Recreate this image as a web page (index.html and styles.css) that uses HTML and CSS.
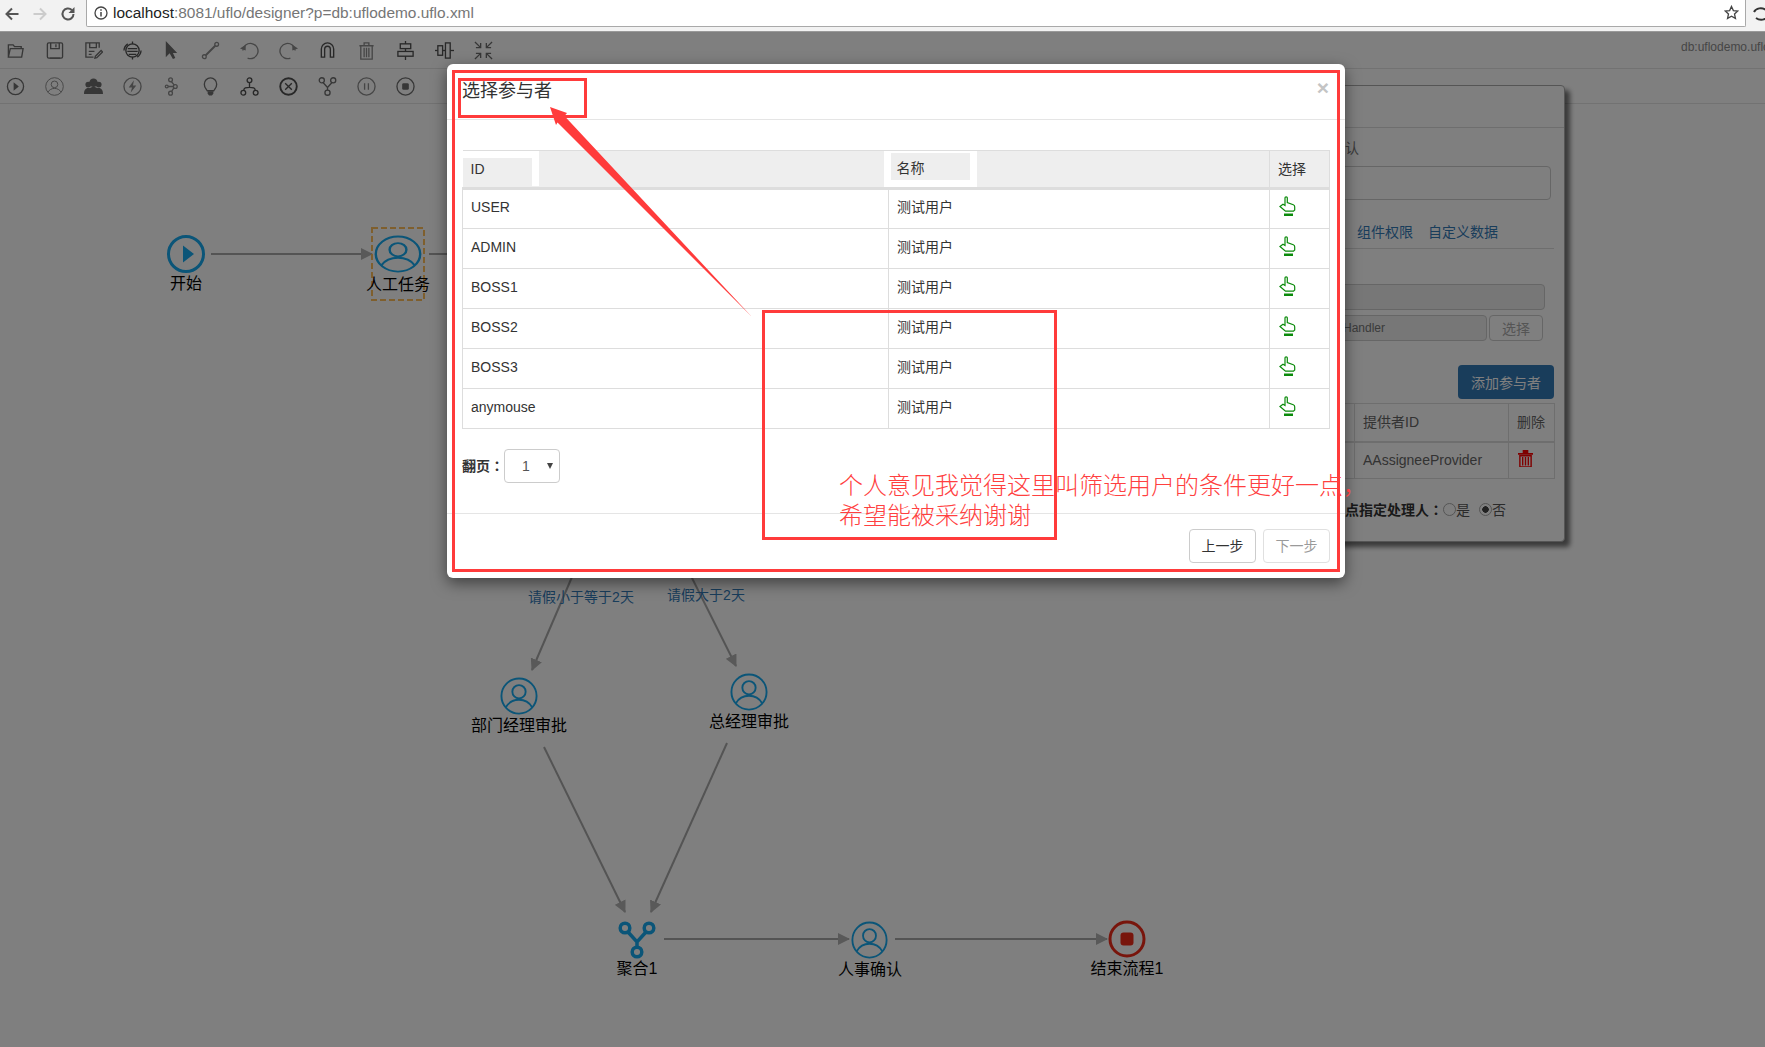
FILE: index.html
```html
<!DOCTYPE html>
<html lang="zh-CN">
<head>
<meta charset="utf-8">
<title>uflo designer</title>
<link rel="stylesheet" href="styles.css">
</head>
<body>
<svg class="sprite" aria-hidden="true">
  <defs>
    <symbol id="user" viewBox="0 0 40 40" preserveAspectRatio="none">
      <circle cx="20" cy="20" r="18.5" fill="none" stroke="currentColor" stroke-width="2"/>
      <circle cx="20" cy="15.5" r="7" fill="none" stroke="currentColor" stroke-width="2"/>
      <path d="M6 32c3-5 8-8 14-8s11 3 14 8" fill="none" stroke="currentColor" stroke-width="2"/>
    </symbol>
    <symbol id="hand" viewBox="0 0 17 20">
      <path d="M1 10.500l3-2.200 2 1.200V1.800c0-1.200 2.300-1.200 2.300 0v4.700l6 2.200c1 .4 1.400 1 1.400 2v3.300l-1.200 1.200H6.500L1 10.500z" fill="none" stroke="#0a8a0a" stroke-width="1.200"/>
      <rect x="5" y="17.500" width="9" height="2.500" fill="#0a8a0a"/>
    </symbol>
    <marker id="tip" markerUnits="userSpaceOnUse" markerWidth="12" markerHeight="12" refX="11" refY="6" orient="auto">
      <path d="M0 0l12 6-12 6z" fill="#b2b2b2"/>
    </marker>
  </defs>
</svg>

<header class="chrome">
  <svg class="nav-icon" viewBox="0 0 16 16"><path d="M14.500 8H3M8 2.500L2.500 8 8 13.500" fill="none" stroke="#555" stroke-width="2"/></svg>
  <svg class="nav-icon" viewBox="0 0 16 16"><path d="M1.500 8H13M8 2.500L13.500 8 8 13.500" fill="none" stroke="#ccc" stroke-width="2"/></svg>
  <svg class="nav-icon" viewBox="0 0 16 16"><path d="M13.500 8a5.500 5.500 0 1 1-1.700-4" fill="none" stroke="#555" stroke-width="2"/><path d="M14.500 1v6h-6z" fill="#555"/></svg>
  <div class="omnibox">
    <svg class="info" viewBox="0 0 14 14"><circle cx="7" cy="7" r="6" fill="none" stroke="#444" stroke-width="1.300"/><path d="M7 6v4.500M7 3.200v1.500" stroke="#444" stroke-width="1.500"/></svg>
    <span class="url"><span class="url-host">localhost</span>:8081/uflo/designer?p=db:uflodemo.uflo.xml</span>
    <svg class="star" viewBox="0 0 16 16"><path d="M8 1.500l2 4.400 4.700.5-3.500 3.200 1 4.700L8 11.900l-4.200 2.400 1-4.700L1.300 6.400 6 5.900z" fill="none" stroke="#444" stroke-width="1.400"/></svg>
  </div>
  <svg class="ext" viewBox="0 0 16 16"><path d="M1 6c2-4 8-5 12-2M15 10c-2 4-8 5-12 2" fill="none" stroke="#333" stroke-width="2"/></svg>
</header>

<div class="toolbar toolbar-top">
  <svg class="ti" viewBox="0 0 20 20"><path d="M2.500 17V4h5l1.500 2h7v2M2.500 17h14l1.500-9H4.500z" class="s"/></svg>
  <svg class="ti" viewBox="0 0 20 20"><rect x="2.500" y="2" width="16" height="16" rx="1.500" class="s"/><path d="M6 2v6h9V2M11.500 3.500v3M5 18h11" class="s"/></svg>
  <svg class="ti" viewBox="0 0 20 20"><path d="M16 7V2H2v15h8M6 2v5h7V2M5 11h6M5 14h3" class="s"/><path d="M12 16l6-6 1.500 1.500-6 6-2 .5z" class="s"/></svg>
  <svg class="ti ti-dark" viewBox="0 0 20 20"><circle cx="10" cy="10" r="7" class="s"/><path d="M5 8h10M4.500 11h11M6 14h8M10 .500v3M10 16.500v3" class="s"/><path d="M1 10a9 9 0 0 1 4-7M19 10a9 9 0 0 1-4 7" class="s"/></svg>
  <svg class="ti" viewBox="0 0 20 20"><path d="M4 0v17l4-4 3.500 6 2.500-1-2.500-5.500H16z" class="f"/></svg>
  <svg class="ti ti-soft" viewBox="0 0 20 20"><circle cx="3.500" cy="16.500" r="2" class="s"/><circle cx="16.500" cy="3.500" r="2" class="s"/><path d="M5 15L15 5" class="s w2"/></svg>
  <svg class="ti ti-soft" viewBox="0 0 20 20"><path d="M3 10a8 8 0 1 1 5 8" class="s"/><path d="M0 8l6-4v6z" class="f"/></svg>
  <svg class="ti ti-soft" viewBox="0 0 20 20"><path d="M17 10a8 8 0 1 0-5 8" class="s"/><path d="M20 8l-6-4v6z" class="f"/></svg>
  <svg class="ti ti-dark" viewBox="0 0 20 20"><path d="M3.500 17V8.500a6.500 6.500 0 0 1 13 0V17h-3.500V8.500a3 3 0 0 0-6 0V17z" class="s"/></svg>
  <svg class="ti ti-soft" viewBox="0 0 20 20"><path d="M2.500 5h15M7.500 5V2h5v3M4 5v14h12V5M7.500 7v10M10 7v10M12.500 7v10" class="s"/></svg>
  <svg class="ti ti-dark" viewBox="0 0 20 20"><path d="M10 0v20" class="s"/><rect x="4.500" y="3" width="11" height="5" class="s b"/><rect x="2" y="11" width="16" height="5" class="s b"/></svg>
  <svg class="ti ti-dark" viewBox="0 0 20 20"><path d="M0 10h20" class="s"/><rect x="3" y="5" width="5" height="10" class="s b"/><rect x="11" y="2" width="5" height="16" class="s b"/></svg>
  <svg class="ti" viewBox="0 0 20 20"><path d="M1 1l6 6M7 2v5H2M19 1l-6 6M13 2v5h5M1 19l6-6M7 18v-5H2M19 19l-6-6M13 18v-5h5" class="s"/></svg>
  <span class="file-name">db:uflodemo.uflo.xml</span>
</div>
<div class="toolbar toolbar-bottom">
  <svg class="ti" viewBox="0 0 20 20"><circle cx="10" cy="10" r="8.500" class="s"/><path d="M8 5.500v9l5.500-4.500z" class="f"/></svg>
  <svg class="ti ti-soft" viewBox="0 0 20 20"><use href="#user" width="20" height="20"/></svg>
  <svg class="ti" viewBox="0 0 20 20"><circle cx="4.500" cy="8" r="3" class="f"/><circle cx="15.500" cy="8" r="3" class="f"/><path d="M0 18c0-4 1.500-6.500 4.500-6.500S9 14 9 18zM11 18c0-4 1.500-6.500 4.500-6.500S20 14 20 18z" class="f"/><circle cx="10" cy="6" r="4.500" class="f"/><path d="M3.500 18c0-5 2.500-7.500 6.500-7.500s6.500 2.500 6.500 7.500z" class="f"/></svg>
  <svg class="ti ti-soft" viewBox="0 0 20 20"><circle cx="10" cy="10" r="9" class="s"/><path d="M11.500 3.500L6 11h3.500L8 16.500 14 9h-3.500z" class="f"/></svg>
  <svg class="ti ti-soft" viewBox="0 0 20 20"><circle cx="9" cy="3" r="2" class="s"/><circle cx="14" cy="10" r="2" class="s"/><circle cx="9" cy="17" r="2" class="s"/><circle cx="5" cy="10" r="1.500" class="s"/><path d="M10 5l3 3.500M12.500 11.500L10 15.500M6.500 10H12" class="s"/></svg>
  <svg class="ti" viewBox="0 0 20 20"><path d="M6.500 14.500C5 12 3.500 11 3.500 7.500a6.500 6.500 0 0 1 13 0c0 3.500-1.500 4.500-3 7z" class="s"/><path d="M7 15h6v2.500l-1.500 2h-3L7 17.500z" class="f"/></svg>
  <svg class="ti ti-dark" viewBox="0 0 20 20"><circle cx="10" cy="3.500" r="2.500" class="s"/><circle cx="3.500" cy="16.500" r="2.500" class="s"/><circle cx="16.500" cy="16.500" r="2.500" class="s"/><path d="M10 6v5M4 14c0-3 2-3 6-3s6 0 6 3" class="s"/></svg>
  <svg class="ti ti-dark" viewBox="0 0 20 20"><circle cx="10" cy="10" r="8.700" class="s w2"/><path d="M6.500 6.500l7 7M13.500 6.500l-7 7" class="s"/></svg>
  <svg class="ti" viewBox="0 0 20 20"><circle cx="4" cy="3.500" r="2.700" class="s"/><circle cx="16" cy="3.500" r="2.700" class="s"/><circle cx="10" cy="16.500" r="2.700" class="s"/><path d="M5.500 6L10 11l4.500-5M10 11v3" class="s"/></svg>
  <svg class="ti ti-soft" viewBox="0 0 20 20"><circle cx="10" cy="10" r="9" class="s"/><path d="M8 6.500v7M12 6.500v7" class="s"/></svg>
  <svg class="ti" viewBox="0 0 20 20"><circle cx="10" cy="10" r="9" class="s"/><rect x="6.500" y="6.500" width="7" height="7" rx="1.500" class="f"/></svg>
</div>

<main class="canvas">
  <svg class="diagram" viewBox="0 104 1765 943">
    <g class="edges">
      <path d="M211 254H372" marker-end="url(#tip)"/>
      <path d="M429 254H460"/>
      <path d="M575 570L532 670" marker-end="url(#tip)"/>
      <path d="M688 570L736 666" marker-end="url(#tip)"/>
      <path d="M544 747L625 912" marker-end="url(#tip)"/>
      <path d="M727 743L651 912" marker-end="url(#tip)"/>
      <path d="M664 939H849" marker-end="url(#tip)"/>
      <path d="M895 939H1107" marker-end="url(#tip)"/>
    </g>
    <g class="node-blue">
      <circle cx="186" cy="254" r="17.500" fill="none" stroke="currentColor" stroke-width="3"/>
      <path d="M183 245.500v17l11-8.500z" fill="currentColor"/>
      <use href="#user" x="374" y="235" width="48" height="38"/>
      <use href="#user" x="500" y="677" width="38" height="38"/>
      <use href="#user" x="730" y="673" width="38" height="38"/>
      <use href="#user" x="851" y="921" width="37" height="38"/>
      <g fill="none" stroke="currentColor" stroke-width="3.500">
        <circle cx="625" cy="928" r="4.800"/>
        <circle cx="649" cy="928" r="4.800"/>
        <circle cx="637" cy="952" r="4.800"/>
        <path d="M628 932l9 10 9-10M637 942v5"/>
      </g>
    </g>
    <rect class="selection" x="372" y="228" width="52" height="72"/>
    <circle cx="1127" cy="939" r="17" fill="none" stroke="#f02a18" stroke-width="3"/>
    <rect x="1120.500" y="932.500" width="13" height="13" rx="3" fill="#f02a18"/>
    <g class="node-label">
      <text x="186" y="289">开始</text>
      <text x="398" y="290">人工任务</text>
      <text x="519" y="731">部门经理审批</text>
      <text x="749" y="727">总经理审批</text>
      <text x="637" y="974">聚合1</text>
      <text x="870" y="975">人事确认</text>
      <text x="1127" y="974">结束流程1</text>
    </g>
    <g class="edge-label">
      <text x="581" y="602">请假小于等于2天</text>
      <text x="706" y="600">请假大于2天</text>
    </g>
  </svg>

  <aside class="panel">
    <div class="panel-head"></div>
    <div class="panel-label">确认</div>
    <div class="panel-input"></div>
    <nav class="panel-tabs"><a>组件权限</a><a>自定义数据</a></nav>
    <div class="panel-input panel-input-off"></div>
    <div class="panel-handler">
      <div class="panel-input panel-input-off panel-input-text">Handler</div>
      <button class="panel-pick">选择</button>
    </div>
    <div class="panel-add"><button class="btn-primary">添加参与者</button></div>
    <table class="panel-table">
      <colgroup><col class="pc-a"><col class="pc-b"><col class="pc-c"></colgroup>
      <thead><tr><th></th><th>提供者ID</th><th>删除</th></tr></thead>
      <tbody><tr><td></td><td>AAssigneeProvider</td><td>
        <svg class="trash" viewBox="0 0 16 18"><path d="M0 3h16v2H0zM5 0h6v3H5z" fill="#f00"/><path d="M2 6h12v12H2zM5 7.500v9M8 7.500v9M11 7.500v9" fill="none" stroke="#f00" stroke-width="1.500"/></svg>
      </td></tr></tbody>
    </table>
    <div class="panel-radio">
      <strong lang="zh-TW">节点指定处理人：</strong>
      <label class="radio"><input type="radio" name="assign">是</label>
      <label class="radio"><input type="radio" name="assign" checked>否</label>
    </div>
  </aside>
</main>

<div class="backdrop"></div>

<section class="modal">
  <header class="modal-head">
    <h4 class="modal-title">选择参与者</h4>
    <span class="modal-close">×</span>
  </header>
  <div class="modal-body">
    <table class="users">
      <colgroup><col class="c-id"><col class="c-name"><col class="c-pick"></colgroup>
      <thead>
        <tr>
          <th><span class="th-id">ID</span></th>
          <th><span class="th-name">名称</span></th>
          <th class="th-plain">选择</th>
        </tr>
      </thead>
      <tbody>
        <tr><td>USER</td><td>测试用户</td><td><svg class="hand"><use href="#hand"/></svg></td></tr>
        <tr><td>ADMIN</td><td>测试用户</td><td><svg class="hand"><use href="#hand"/></svg></td></tr>
        <tr><td>BOSS1</td><td>测试用户</td><td><svg class="hand"><use href="#hand"/></svg></td></tr>
        <tr><td>BOSS2</td><td>测试用户</td><td><svg class="hand"><use href="#hand"/></svg></td></tr>
        <tr><td>BOSS3</td><td>测试用户</td><td><svg class="hand"><use href="#hand"/></svg></td></tr>
        <tr><td>anymouse</td><td>测试用户</td><td><svg class="hand"><use href="#hand"/></svg></td></tr>
      </tbody>
    </table>
    <div class="pager">
      <strong lang="zh-TW">翻页：</strong>
      <div class="pager-select"><span>1</span><i class="caret"></i></div>
    </div>
  </div>
  <footer class="modal-foot">
    <button class="btn">上一步</button>
    <button class="btn btn-off">下一步</button>
  </footer>
</section>

<div class="annotations">
  <div class="mark mark-modal"></div>
  <div class="mark mark-title"></div>
  <div class="mark mark-note"></div>
  <svg class="mark-arrow" viewBox="0 0 1765 1047"><path d="M550 107L567 113 564.500 116 752 317 557.500 122.500 556 125z"/></svg>
  <p class="note">个人意见我觉得这里叫筛选用户的条件更好一点，<br>希望能被采纳谢谢</p>
</div>
</body>
</html>
```
FILE: styles.css
```css
* { box-sizing: border-box; }
html, body { height: 100%; }
body {
  margin: 0;
  height: 1047px;
  overflow: hidden;
  position: relative;
  display: flex;
  flex-direction: column;
  background: #fff;
  color: #333;
  font: 14px/20px "Liberation Sans", "Noto Sans CJK SC", sans-serif;
}
.sprite { position: absolute; width: 0; height: 0; }

/* browser chrome */
.chrome {
  height: 32px;
  flex: none;
  display: flex;
  align-items: center;
  background: #f2f2f2;
  border-bottom: 1px solid #999;
  position: relative;
  z-index: 40;
  padding: 0 0 4px 4px;
}
.nav-icon { width: 16px; height: 16px; margin-right: 12px; flex: none; }
.omnibox {
  width: 1660px;
  margin-left: -2px;
  height: 28px;
  margin-top: -1px;
  display: flex;
  align-items: center;
  background: #fff;
  border: 1px solid #a9a9a9;
  border-top: 0;
  border-radius: 0 0 2px 2px;
  padding-left: 7px;
  flex: none;
}
.info { width: 14px; height: 14px; margin-right: 5px; flex: none; }
.url { font-size: 15.450px; color: #767676; flex: 1; white-space: nowrap; }
.url-host { color: #222; }
.star { width: 15px; height: 15px; margin-right: 6px; flex: none; }
.ext { width: 16px; height: 16px; margin-left: 7px; flex: none; }

/* toolbars */
.toolbar {
  flex: none;
  display: flex;
  align-items: center;
  gap: 20px;
  padding-left: 6px;
  border-bottom: 1px solid #e4e4e4;
  position: relative;
  color: #6e6e6e;
}
.toolbar-top { height: 37px; }
.toolbar-bottom { height: 35px; }
.ti { width: 19px; height: 19px; flex: none; color: #6e6e6e; }
.ti-dark { color: #505050; }
.ti-soft { color: #8c8c8c; }
.s { fill: none; stroke: currentColor; stroke-width: 1.400; }
.b { fill: #fff; }
.w2 { stroke-width: 2; }
.f { fill: currentColor; }
.file-name {
  position: absolute;
  left: 1681px;
  top: 5px;
  font-size: 12px;
  color: #8c8c8c;
  white-space: nowrap;
}

/* canvas */
.canvas { flex: 1; position: relative; }
.diagram { position: absolute; left: 0; top: 0; width: 1765px; height: 943px; }
.edges path { fill: none; stroke: #a8a8a8; stroke-width: 2; }
.node-blue { color: #16aaf0; }
.selection { fill: none; stroke: #ffbe5a; stroke-width: 2; stroke-dasharray: 6 3; }
.node-label text { font-size: 16px; text-anchor: middle; fill: #000; }
.edge-label text { font-size: 14px; text-anchor: middle; fill: #337ab7; }

/* property panel behind the dialog */
.panel {
  position: absolute;
  left: 1316px;
  top: -19px;
  width: 249px;
  height: 457px;
  background: #fff;
  border: 1px solid #aaa;
  border-radius: 4px;
  box-shadow: 5px 5px 5px rgba(0, 0, 0, .55);
  padding: 0 10px 0 14px;
  color: #777;
}
.panel-head { height: 42px; margin: 0 -10px 0 -14px; border-bottom: 1px solid #ddd; }
.panel-label { margin-top: 10px; height: 20px; }
.panel-input {
  height: 34px;
  margin: 8px 3px 0 0;
  border: 1px solid #ccc;
  border-radius: 4px;
}
.panel-tabs {
  margin-top: 20px;
  height: 29px;
  padding-left: 26px;
  border-bottom: 1px solid #ddd;
  display: flex;
  gap: 15px;
  color: #337ab7;
  line-height: 24px;
}
.panel-input-off { height: 26px; margin: 35px 9px 0 0; background: #eee; }
.panel-handler { display: flex; gap: 2px; margin-top: 5px; }
.panel-input-text {
  width: 156px;
  margin: 0;
  padding-left: 11px;
  font-size: 12px;
  line-height: 24px;
}
.panel-pick {
  width: 54px;
  height: 26px;
  background: #fff;
  border: 1px solid #ccc;
  border-radius: 4px;
  font: 14px "Liberation Sans", "Noto Sans CJK SC", sans-serif;
  color: #aaa;
  padding: 0;
}
.panel-add { display: flex; justify-content: flex-end; margin-top: 24px; }
.btn-primary {
  width: 96px;
  height: 34px;
  background: #337ab7;
  border: 0;
  border-radius: 4px;
  color: #fff;
  font: 14px "Liberation Sans", "Noto Sans CJK SC", sans-serif;
  padding: 0;
}
.panel-table {
  width: 223px;
  margin-top: 4px;
  border-collapse: collapse;
  table-layout: fixed;
  color: #666;
}
.pc-a { width: 23px; }
.pc-b { width: 154px; }
.pc-c { width: 46px; }
.panel-table th, .panel-table td { border: 1px solid #ddd; padding: 0 8px; font-weight: 400; text-align: left; }
.panel-table th { height: 38px; border-bottom-width: 2px; }
.panel-table td { height: 37px; }
.trash { display: block; width: 15px; height: 17px; margin-left: 1px; margin-top: -3px; }
.panel-radio { display: flex; align-items: center; margin-top: 21px; color: #555; white-space: nowrap; }
.panel-radio strong { width: 112px; flex: none; color: #333; font-family: "Liberation Sans", "Noto Sans CJK TC", sans-serif; }
.radio { display: flex; align-items: center; margin-right: 9px; }
.radio input {
  appearance: none;
  margin: 0 0 2px;
  width: 13px;
  height: 13px;
  border: 1px solid #aaa;
  border-radius: 50%;
  background: #fff;
}
.radio input:checked { background: radial-gradient(circle, #444 0 3px, #fff 3.500px); }

/* dim layer */
.backdrop {
  position: absolute;
  left: 0;
  top: 32px;
  right: 0;
  bottom: 0;
  background: rgba(0, 0, 0, .5);
  z-index: 10;
}

/* dialog */
.modal {
  position: absolute;
  left: 447px;
  top: 64px;
  width: 898px;
  height: 514px;
  display: flex;
  flex-direction: column;
  background: #fff;
  border-radius: 6px;
  box-shadow: 0 5px 15px rgba(0, 0, 0, .5);
  z-index: 20;
}
.modal-head {
  height: 56px;
  flex: none;
  display: flex;
  justify-content: space-between;
  padding: 15px 16px 0 15px;
  border-bottom: 1px solid #e5e5e5;
}
.modal-title { margin: 0; font-size: 18px; font-weight: 400; line-height: 24px; }
.modal-close { font-size: 21px; font-weight: 700; line-height: 18px; color: #c4c4c4; }
.modal-body { flex: 1; padding: 30px 15px 0; }
.users { width: 867px; border-collapse: collapse; table-layout: fixed; }
.c-id { width: 426px; }
.c-name { width: 381px; }
.c-pick { width: 60px; }
.users th {
  height: 38px;
  padding: 0;
  background: #eee;
  border-top: 1px solid #ddd;
  border-bottom: 3px solid #ddd;
  font-weight: 400;
  text-align: left;
  vertical-align: top;
}
.users td {
  height: 40px;
  padding: 0 7px 4px 8px;
  border: 1px solid #ddd;
  font-size: 14px;
}
.th-id {
  display: block;
  width: 76px;
  height: 36px;
  margin-top: -1px;
  padding: 0 0 0 8px;
  background: #eee;
  border-style: solid;
  border-color: #fff;
  border-width: 8px 7px 0 0;
  line-height: 22px;
}
.th-name {
  display: block;
  width: 93px;
  height: 37px;
  margin: -1px 0 0 -5px;
  background: #eee;
  border-style: solid;
  border-color: #fff;
  border-width: 3px 7px 7px;
  padding: 2px 0 0 6px;
  line-height: 27px;
}
.users th.th-plain { padding: 8px 7px 0 8px; border-left: 1px solid #ddd; border-right: 1px solid #ddd; }
.hand { display: block; width: 17px; height: 20px; margin: -2px 0 0 1px; }
.pager { display: flex; align-items: center; margin-top: 20px; }
.pager strong { width: 42px; font-weight: 700; white-space: nowrap; color: #333; font-family: "Liberation Sans", "Noto Sans CJK TC", sans-serif; }
.pager-select {
  width: 56px;
  height: 34px;
  display: flex;
  align-items: center;
  justify-content: space-between;
  padding: 0 6px 0 17px;
  border: 1px solid #ccc;
  border-radius: 4px;
  color: #555;
}
.caret {
  width: 0;
  height: 0;
  border-left: 3px solid transparent;
  border-right: 3px solid transparent;
  border-top: 6px solid #444;
}
.modal-foot {
  height: 65px;
  flex: none;
  display: flex;
  justify-content: flex-end;
  gap: 7px;
  padding-top: 15px;
  padding-right: 15px;
  border-top: 1px solid #e5e5e5;
}
.btn {
  width: 67px;
  height: 34px;
  background: #fff;
  border: 1px solid #ccc;
  border-radius: 4px;
  color: #333;
  font: 14px "Liberation Sans", "Noto Sans CJK SC", sans-serif;
  padding: 0 0 2px;
}
.btn-off { color: #9a9a9a; border-color: #e0e0e0; }

/* red review marks */
.annotations { position: absolute; left: 0; top: 0; width: 1765px; height: 1047px; z-index: 30; pointer-events: none; }
.mark { position: absolute; border: 3px solid #ff3b3b; }
.mark-modal { left: 452px; top: 70px; width: 888px; height: 502px; }
.mark-title { left: 458px; top: 78px; width: 129px; height: 40px; }
.mark-note { left: 762px; top: 310px; width: 295px; height: 230px; }
.mark-arrow { position: absolute; left: 0; top: 0; width: 1765px; height: 1047px; }
.mark-arrow path { fill: #ff3b3b; }
.note {
  position: absolute;
  left: 839px;
  top: 471px;
  margin: 0;
  font-size: 24px;
  line-height: 30px;
  color: #ff4040;
  white-space: nowrap;
  font-weight: 300;
}
```
